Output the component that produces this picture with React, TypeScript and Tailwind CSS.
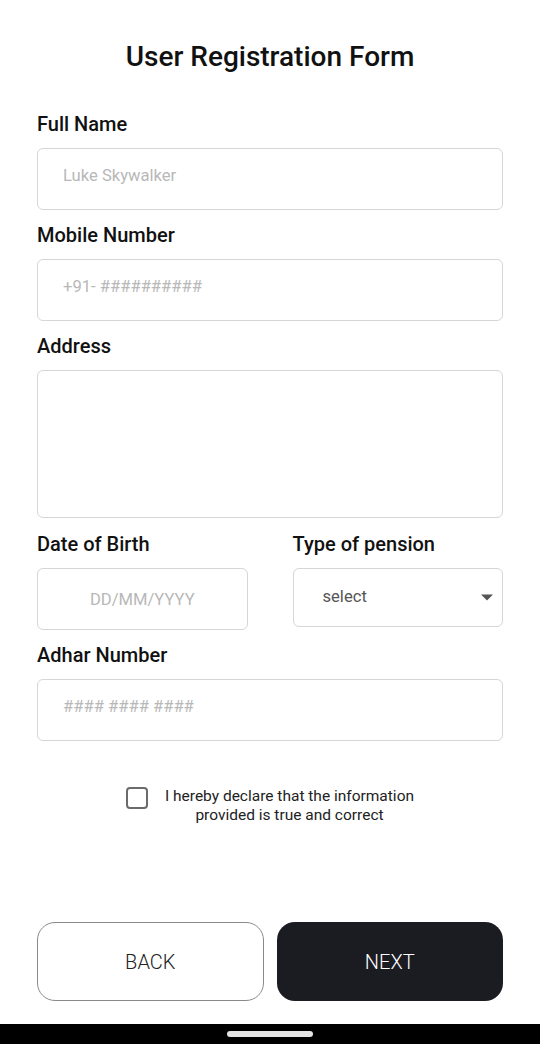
import { useState } from "react";

function Field({ label, children }: { label: string; children: React.ReactNode }) {
  return (
    <div className="flex flex-col">
      <label className="h-6 leading-6 text-[20px] font-medium text-[#111]">{label}</label>
      <div className="mt-3">{children}</div>
    </div>
  );
}

const inputCls =
  "w-full h-[62px] rounded-md border border-[#d6d6d6] bg-white px-[25px] pb-2 text-[16.6px] text-[#222] placeholder:text-[#b8b8b8] outline-none";

export default function App() {
  const [agreed, setAgreed] = useState(false);

  return (
    <div className="min-h-[1044px] w-[540px] bg-white flex flex-col font-['Roboto',sans-serif]">
      <div className="flex-1 flex flex-col px-[37px] pt-[41px]">
        <h1 className="h-8 leading-8 text-center text-[28px] font-medium text-[#111]">User Registration Form</h1>

        <div className="mt-[39px] flex flex-col gap-[13px]">
          <Field label="Full Name">
            <input className={inputCls} placeholder="Luke Skywalker" />
          </Field>
          <Field label="Mobile Number">
            <input className={inputCls} placeholder="+91- ##########" />
          </Field>
          <Field label="Address">
            <textarea className="block w-full h-[148px] rounded-md border border-[#d6d6d6] bg-white p-4 text-[16px] outline-none resize-none" />
          </Field>

          <div className="grid grid-cols-2 gap-[45px] pt-px">
            <Field label="Date of Birth">
              <input className={inputCls + " text-center !pb-0"} placeholder="DD/MM/YYYY" />
            </Field>
            <Field label="Type of pension">
              <div className="h-[59px] rounded-md border border-[#d6d6d6] flex items-center justify-between pl-[29px] pr-[8px]">
                <span className="text-[16.6px] text-[#555]">select</span>
                <svg width="14" height="7" viewBox="0 0 14 7">
                  <path d="M1 0.5 L13 0.5 L7 6.5 Z" fill="#555" />
                </svg>
              </div>
            </Field>
          </div>

          <Field label="Adhar Number">
            <input className={inputCls} placeholder="#### #### ####" />
          </Field>
        </div>

        <div className="mt-[46px] flex justify-center items-start gap-[17px]">
          <button
            onClick={() => setAgreed(!agreed)}
            className="mt-[0px] w-[22px] h-[22px] rounded-[4px] border-2 border-[#6b6b6b] bg-white shrink-0"
          />
          <p className="text-center text-[15.5px] leading-[19px] text-[#222]">
            I hereby declare that the information
            <br />
            provided is true and correct
          </p>
        </div>

        <div className="mt-auto mb-[23px] grid grid-cols-2 gap-[13px]">
          <button className="h-[79px] rounded-[18px] border border-[#8a8a8a] bg-white text-[20px] font-light text-[#222]">
            BACK
          </button>
          <button className="h-[79px] rounded-[18px] bg-[#1b1b22] text-[20px] font-light text-white">
            NEXT
          </button>
        </div>
      </div>

      <div className="h-5 bg-black flex items-center justify-center">
        <div className="w-[86px] h-[6px] rounded-full bg-[#e4e4e4]" />
      </div>
    </div>
  );
}
